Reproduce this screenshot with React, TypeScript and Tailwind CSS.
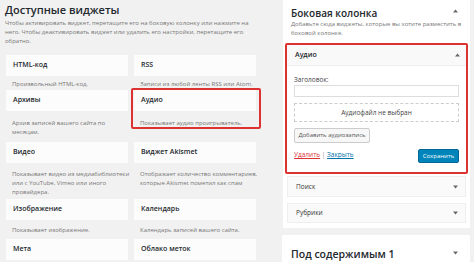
import React from "react";

const font = { fontFamily: '"Open Sans", "Noto Sans", sans-serif' };

function Down() {
  return (
    <svg width="5" height="4" viewBox="0 0 5 4" className="shrink-0">
      <path d="M0 0.5 L5 0.5 L2.5 3.5 Z" fill="#666" />
    </svg>
  );
}
function Up() {
  return (
    <svg width="5" height="4" viewBox="0 0 5 4" className="shrink-0">
      <path d="M0 3.5 L5 3.5 L2.5 0.5 Z" fill="#666" />
    </svg>
  );
}

type Cell = { name: string; desc: string[]; active?: boolean };
type Row = { h: string; pt: string; cells: Cell[] };

const rows: Row[] = [
  {
    h: "h-[35px]",
    pt: "pt-[4px]",
    cells: [
      { name: "HTML-код", desc: ["Произвольный HTML-код."] },
      { name: "RSS", desc: ["Записи из любой ленты RSS или Atom."] },
    ],
  },
  {
    h: "h-[52px]",
    pt: "pt-[8px]",
    cells: [
      { name: "Архивы", desc: ["Архив записей вашего сайта по", "месяцам."] },
      { name: "Аудио", desc: ["Показывает аудио проигрыватель."], active: true },
    ],
  },
  {
    h: "h-[57px]",
    pt: "pt-[7px]",
    cells: [
      {
        name: "Видео",
        desc: ["Показывает видео из медиабиблиотеки", "или с YouTube, Vimeo или иного", "провайдера."],
      },
      {
        name: "Виджет Akismet",
        desc: ["Отображает количество комментариев,", "которые Akismet пометил как спам"],
      },
    ],
  },
  {
    h: "h-[40px]",
    pt: "pt-[6px]",
    cells: [
      { name: "Изображение", desc: ["Показывает изображение."] },
      { name: "Календарь", desc: ["Календарь записей вашего сайта."] },
    ],
  },
  {
    h: "h-[30px]",
    pt: "pt-[6px]",
    cells: [
      { name: "Мета", desc: [] },
      { name: "Облако меток", desc: [] },
    ],
  },
];

export default function App() {
  return (
    <div
      className="w-[474px] h-[262px] bg-[#f1f1f1] overflow-hidden flex text-[#23282d]"
      style={font}
    >
      {/* left */}
      <div className="w-[276px] shrink-0 pt-[3px]">
        <div className="pl-[5px] text-[11px] leading-[14px] font-semibold text-[#23282d]">
          Доступные виджеты
        </div>
        <div className="pl-[5px] mt-[2px] text-[6px] leading-[9px] text-[#777] whitespace-nowrap">
          <div>Чтобы активировать виджет, перетащите его на боковую колонку или нажмите на</div>
          <div>него. Чтобы деактивировать виджет или удалить его настройки, перетащите его</div>
          <div>обратно.</div>
        </div>
        <div className="ml-[6px] mt-[9px] flex flex-col">
          {rows.map((r, i) => (
            <div key={i} className={`grid grid-cols-[122px_122px] gap-x-[6px] ${r.h}`}>
              {r.cells.map((c) => (
                <div key={c.name} className="relative">
                  {c.active && (
                    <div className="absolute -left-[3px] -right-[5px] -top-[2px] h-[41px] border-2 border-[#dc3232] rounded-[2px]" />
                  )}
                  <div className="h-[21px] bg-[#fcfcfc] flex items-center pl-[7px] text-[7px] font-semibold text-[#23282d]">
                    {c.name}
                  </div>
                  <div className={`${r.pt} pl-[6px] text-[6px] leading-[9px] text-[#777]`}>
                    {c.desc.map((d) => (
                      <div key={d} className="whitespace-nowrap">
                        {d}
                      </div>
                    ))}
                  </div>
                </div>
              ))}
            </div>
          ))}
        </div>
      </div>

      {/* right */}
      <div className="flex flex-col pl-[7px]">
        <div className="w-[187px] bg-white px-[4px] pb-[5px]">
          <div className="pt-[6px] px-[4px] flex items-start justify-between">
            <div className="text-[10px] leading-[14px] font-semibold">Боковая колонка</div>
            <div className="pt-[3px] pr-[4px]">
              <Up />
            </div>
          </div>
          <div className="px-[4px] text-[6px] leading-[9px] text-[#777] whitespace-nowrap">
            <div>Добавьте сюда виджеты, которые вы хотите разместить в</div>
            <div>боковой колонке.</div>
          </div>
          <div className="-mx-[2px] mt-[5px] border-2 border-[#dc3232] rounded-[2px] bg-white">
            <div className="h-[21px] bg-[#f9f9f9] border-b border-[#eee] flex items-center justify-between pl-[8px] pr-[6px]">
              <span className="text-[7px] font-semibold">Аудио</span>
              <Up />
            </div>
            <div className="px-[7px] pt-[9px] pb-[9px]">
              <div className="text-[6.5px] leading-[9px] text-[#444]">Заголовок:</div>
              <div className="mt-[1px] h-[12px] border border-[#ddd] bg-white" />
              <div className="mt-[6px] h-[19px] border border-dashed border-[#ccc] flex items-center justify-center text-[6.5px] text-[#444]">
                Аудиофайл не выбран
              </div>
              <div className="mt-[6px] h-[15px] w-[76px] border border-[#ccc] bg-[#f7f7f7] rounded-[2px] flex items-center justify-center text-[6px] text-[#555] whitespace-nowrap">
                Добавить аудиозапись
              </div>
              <div className="mt-[6px] flex items-center justify-between">
                <div className="text-[6.5px] -mt-[2px]">
                  <span className="text-[#dc3232] underline">Удалить</span>
                  <span className="text-[#999]"> | </span>
                  <span className="text-[#0073aa] underline">Закрыть</span>
                </div>
                <div className="h-[14px] w-[41px] bg-[#0085ba] border border-[#006799] rounded-[2px] flex items-center justify-center text-[6px] text-white">
                  Сохранить
                </div>
              </div>
            </div>
          </div>
          <div className="mt-[2px] h-[21px] bg-[#fafafa] border border-[#eee] flex items-center justify-between pl-[8px] pr-[7px]">
            <span className="text-[6.5px] text-[#333]">Поиск</span>
            <Down />
          </div>
          <div className="mt-[6px] h-[20px] bg-[#fafafa] border border-[#eee] flex items-center justify-between pl-[8px] pr-[7px]">
            <span className="text-[6.5px] text-[#333]">Рубрики</span>
            <Down />
          </div>
        </div>
        <div className="-ml-[1px] mt-[7px] w-[188px] h-[40px] bg-white flex items-start justify-between pl-[9px] pr-[12px] pt-[12px]">
          <span className="text-[10.5px] leading-[14px] font-semibold">Под содержимым 1</span>
          <div className="pt-[4px]">
            <Down />
          </div>
        </div>
      </div>
    </div>
  );
}
